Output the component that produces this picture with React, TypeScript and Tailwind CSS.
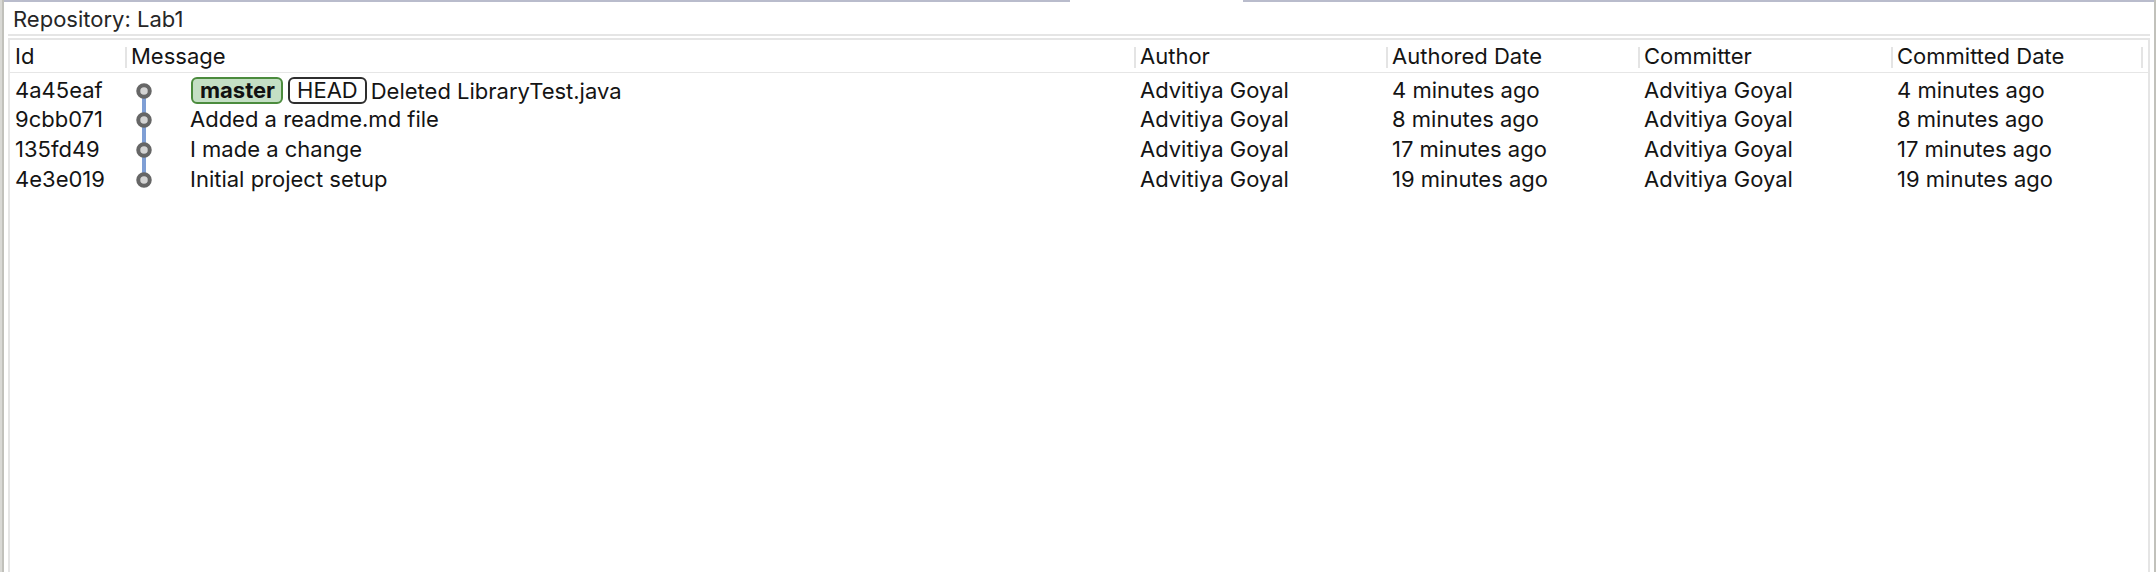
import React from 'react';

interface Commit {
  id: string;
  message: string;
  refs?: boolean;
  authored: string;
}

const commits: Commit[] = [
  { id: '4a45eaf', message: 'Deleted LibraryTest.java', refs: true, authored: '4 minutes ago' },
  { id: '9cbb071', message: 'Added a readme.md file', authored: '8 minutes ago' },
  { id: '135fd49', message: 'I made a change', authored: '17 minutes ago' },
  { id: '4e3e019', message: 'Initial project setup', authored: '19 minutes ago' },
];

const cols = 'grid grid-cols-[115px_1009px_252px_252px_253px_250px_1fr]';

function HeaderCell({ label, first }: { label?: string; first?: boolean }) {
  if (first) {
    return <div className="flex items-center pl-[5px]">{label}</div>;
  }
  return (
    <div className="flex items-start">
      <div className="mt-[7px] h-[21px] w-[2px] shrink-0 bg-[#e4e4e4]" />
      {label && <div className="pl-[4px] leading-[33px]">{label}</div>}
    </div>
  );
}

function GraphNode({ first, last }: { first: boolean; last: boolean }) {
  return (
    <svg width="65" height="30" viewBox="0 0 65 30" className="shrink-0">
      {!first && <line x1="19" y1="0" x2="19" y2="15" stroke="#7f9fd5" strokeWidth="4" />}
      {!last && <line x1="19" y1="15" x2="19" y2="30" stroke="#7f9fd5" strokeWidth="4" />}
      <circle cx="19" cy="15" r="5.75" fill="#d4d4d4" stroke="#666666" strokeWidth="4" />
    </svg>
  );
}

export default function App() {
  return (
    <div className="flex h-[572px] w-[2156px] overflow-hidden bg-white font-['Inter','Liberation_Sans',sans-serif] text-[22px] text-[#141414]">
      <div className="w-[2px] shrink-0 bg-[#d9d9d5]" />
      <div className="w-[2px] shrink-0 bg-[#c1c1bb]" />
      <div className="flex min-w-0 flex-1 flex-col">
        <div className="flex h-[2px] shrink-0">
          <div className="w-[1066px] bg-[#b9bccc]" />
          <div className="w-[173px]" />
          <div className="flex-1 bg-[#b9bccc]" />
        </div>
        <div className="flex h-[32px] shrink-0 items-center pl-[9px] pt-[3px] text-[#262626]">
          Repository: Lab1
        </div>
        <div className="mx-[4px] h-[2px] shrink-0 bg-[#e5e5e5]" />
        <div className="h-[2px] shrink-0" />
        <div className="mx-[4px] flex flex-1 flex-col border-2 border-b-0 border-[#e5e5e5]">
          <div className={`${cols} h-[33px] border-b border-[#e6e6e6]`}>
            <HeaderCell label="Id" first />
            <HeaderCell label="Message" />
            <HeaderCell label="Author" />
            <HeaderCell label="Authored Date" />
            <HeaderCell label="Committer" />
            <HeaderCell label="Committed Date" />
            <HeaderCell />
          </div>
          {commits.map((c, i) => (
            <div key={c.id} className={`${cols} h-[30px]`}>
              <div className="flex items-center pl-[5px]">{c.id}</div>
              <div className="flex items-center">
                <GraphNode first={i === 0} last={i === commits.length - 1} />
                {c.refs && (
                  <>
                    <span className="ml-[1px] flex h-[27px] items-center rounded-[6px] border-2 border-[#4b8b3d] bg-[#c4dfc4] pl-[7px] pr-[6px] font-bold text-[#111]">
                      master
                    </span>
                    <span className="ml-[5px] flex h-[27px] items-center rounded-[6px] border-2 border-[#2e2e2e] bg-white px-[7px]">
                      HEAD
                    </span>
                  </>
                )}
                <span className={c.refs ? 'ml-[4px] pt-[2px]' : ''}>{c.message}</span>
              </div>
              <div className="flex items-center pl-[6px]">Advitiya Goyal</div>
              <div className="flex items-center pl-[6px]">{c.authored}</div>
              <div className="flex items-center pl-[6px]">Advitiya Goyal</div>
              <div className="flex items-center pl-[6px]">{c.authored}</div>
              <div />
            </div>
          ))}
        </div>
      </div>
      <div className="w-[2px] shrink-0 bg-[#c1c1bb]" />
    </div>
  );
}
